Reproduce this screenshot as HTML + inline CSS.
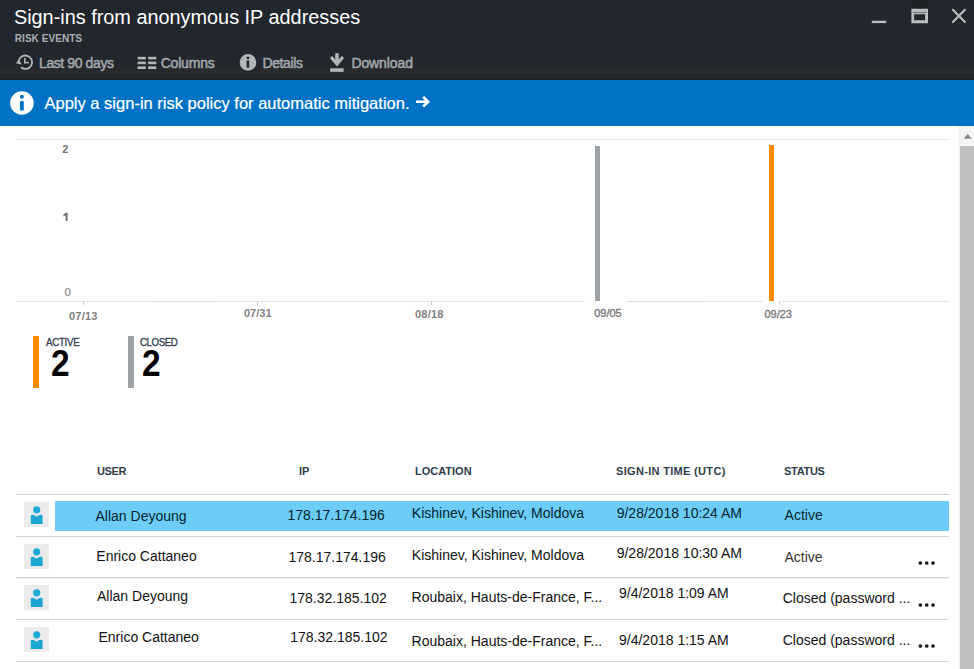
<!DOCTYPE html>
<html><head><meta charset="utf-8">
<style>
html,body{margin:0;padding:0;}
body{width:974px;height:669px;position:relative;overflow:hidden;background:#fff;font-family:"Liberation Sans",sans-serif;}
.t{position:absolute;white-space:nowrap;}
.r{position:absolute;}
.ic{position:absolute;overflow:visible;}
</style></head><body>
<div class="r" style="left:0px;top:0px;width:974px;height:80px;background:#22272e;"></div>
<div class="r" style="left:0px;top:67px;width:974px;height:6.5px;background:#27292d;"></div>
<div class="r" style="left:0px;top:77.5px;width:974px;height:2.5px;background:#1c2128;"></div>
<div class="t" style="left:13.90px;top:8.27px;font-size:19.88px;line-height:19.88px;color:#ffffff;">Sign-ins from anonymous IP addresses</div>
<div class="t" style="left:14.80px;top:34.03px;font-size:10px;line-height:10px;color:#a9aeb4;font-weight:bold;letter-spacing:0.05px;">RISK EVENTS</div>
<div class="t" style="left:39.00px;top:55.95px;font-size:14px;line-height:14px;color:#a3a8ad;letter-spacing:-0.4px;-webkit-text-stroke:0.5px #a3a8ad;">Last 90 days</div>
<div class="t" style="left:160.70px;top:55.95px;font-size:14px;line-height:14px;color:#a3a8ad;letter-spacing:-0.2px;-webkit-text-stroke:0.5px #a3a8ad;">Columns</div>
<div class="t" style="left:262.50px;top:55.95px;font-size:14px;line-height:14px;color:#a3a8ad;letter-spacing:-0.4px;-webkit-text-stroke:0.5px #a3a8ad;">Details</div>
<div class="t" style="left:351.40px;top:55.95px;font-size:14px;line-height:14px;color:#a3a8ad;letter-spacing:-0.1px;-webkit-text-stroke:0.5px #a3a8ad;">Download</div>
<svg class="ic" style="left:0;top:0" width="974" height="80" viewBox="0 0 974 80">
 <g fill="none" stroke="#b3b7bb" stroke-width="2">
  <path d="M21.0 67.3 A6.7 6.7 0 1 0 18.7 61.4" stroke-width="1.8"/>
 </g>
 <path d="M15.9 63.3 L19.0 59.6 L21.6 64.6 Z" fill="#b3b7bb"/>
 <rect x="24.1" y="58.1" width="1.6" height="5.3" fill="#b3b7bb"/>
 <rect x="24.1" y="61.9" width="4.8" height="1.5" fill="#b3b7bb"/>
 <g fill="#b3b7bb">
  <rect x="137.6" y="56.8" width="8.2" height="2.6"/><rect x="148.1" y="56.8" width="8.2" height="2.6"/>
  <rect x="137.6" y="61.6" width="8.2" height="2.6"/><rect x="148.1" y="61.6" width="8.2" height="2.6"/>
  <rect x="137.6" y="66.4" width="8.2" height="2.6"/><rect x="148.1" y="66.4" width="8.2" height="2.6"/>
  <circle cx="248" cy="62.4" r="8.3"/>
  <rect x="330.2" y="68.3" width="13.4" height="3.5"/>
 </g>
 <g fill="#22272e">
  <rect x="246.6" y="56.8" width="2.6" height="2.2"/>
  <rect x="246.6" y="60.4" width="2.6" height="7.3"/>
 </g>
 <g fill="#b3b7bb">
  <path d="M335.2 53.6 Q337 52.6 338.8 53.6 V63 H335.2 Z"/>
  <path d="M329.9 58.1 L332.3 55.9 L337 61.4 L341.7 55.9 L344.1 58.1 L337 66.4 Z"/>
 </g>
 <rect x="911.5" y="0" width="16.5" height="8.5" fill="#1f2328"/>
 <rect x="871.8" y="20.7" width="14.4" height="2.4" fill="#b9bcc0"/>
 <path fill="#b9bcc0" fill-rule="evenodd" d="M911.4 8.7 H928 V23.3 H911.4 Z M914.1 14.3 V20.3 H925.1 V14.3 Z"/>
 <rect x="913" y="12" width="13.5" height="0.9" fill="#6c7075"/>
 <path d="M952.9 9.8 L964.9 22 M964.9 9.8 L952.9 22" stroke="#b9bcc0" stroke-width="2.1" stroke-linecap="round" fill="none"/>
</svg>
<div class="r" style="left:0px;top:80px;width:974px;height:46px;background:#0072c6;"></div>
<svg class="ic" style="left:0;top:80px" width="60" height="46" viewBox="0 80 60 46">
 <circle cx="21.9" cy="103" r="11.8" fill="#ffffff"/>
 <circle cx="21.9" cy="96.8" r="1.95" fill="#0072c6"/>
 <rect x="20.0" y="100.9" width="3.8" height="9.7" rx="0.9" fill="#0072c6"/>
</svg>
<div class="t" style="left:44.50px;top:94.83px;font-size:16.5px;line-height:16.5px;color:#ffffff;-webkit-text-stroke:0.2px #fff;">Apply a sign-in risk policy for automatic mitigation.</div>
<svg class="ic" style="left:410px;top:90px" width="24" height="24" viewBox="410 90 24 24">
 <path d="M416 101.7 H427.5 M423.2 96.9 L428.2 101.7 L423.2 106.5" fill="none" stroke="#fff" stroke-width="2.6" stroke-linejoin="miter"/>
</svg>
<div class="r" style="left:958px;top:126px;width:16px;height:543px;background:#f3f3f3;"></div>
<div class="r" style="left:960px;top:144px;width:14px;height:1.5px;background:#fafafa;"></div>
<div class="r" style="left:960px;top:145.5px;width:14px;height:524px;background:#c1c1c1;"></div>
<svg class="ic" style="left:959px;top:126px" width="15" height="20" viewBox="959 126 15 20">
 <path d="M963.6 138.8 L967.7 134 L971.8 138.8 Z" fill="#8a8a8a"/>
</svg>
<div class="r" style="left:16px;top:139px;width:933px;height:1px;background:#e4e4e4;"></div>
<div class="r" style="left:16px;top:301px;width:569px;height:1px;background:#e2e2e2;"></div>
<div class="r" style="left:627px;top:301px;width:135px;height:1px;background:#e2e2e2;"></div>
<div class="r" style="left:781px;top:301px;width:168px;height:1px;background:#e2e2e2;"></div>
<div class="r" style="left:153px;top:300.5px;width:59px;height:1.5px;background:#dcdcdc;"></div>
<div class="r" style="left:627px;top:300.5px;width:75px;height:1.5px;background:#dcdcdc;"></div>
<div class="r" style="left:83.4px;top:301px;width:1px;height:4px;background:#cfcfcf;"></div>
<div class="r" style="left:257.2px;top:301px;width:1px;height:4px;background:#cfcfcf;"></div>
<div class="r" style="left:430.8px;top:301px;width:1px;height:4px;background:#cfcfcf;"></div>
<div class="r" style="left:778.5px;top:301px;width:1px;height:4px;background:#cfcfcf;"></div>
<div class="t" style="left:62.30px;top:143.69px;font-size:11px;line-height:11px;color:#707070;font-weight:bold;">2</div>
<svg class="ic" style="left:60px;top:210px" width="12" height="14" viewBox="60 210 12 14"><path d="M65.6 212.8 H67.6 V221.1 H65.6 V215.2 Q64.6 216.0 63.3 216.4 V214.7 Q64.9 214.0 65.6 212.8 Z" fill="#6e6e6e"/></svg>
<div class="t" style="left:64.60px;top:287.43px;font-size:11.3px;line-height:11.3px;color:#8c8c8c;-webkit-text-stroke:0.25px #8c8c8c;">0</div>
<div class="t" style="left:69.00px;top:311.09px;font-size:11px;line-height:11px;color:#7f7f7f;font-weight:bold;letter-spacing:0.2px;">07/13</div>
<div class="t" style="left:244.00px;top:307.69px;font-size:11px;line-height:11px;color:#7f7f7f;font-weight:bold;">07/31</div>
<div class="t" style="left:415.00px;top:309.39px;font-size:11px;line-height:11px;color:#7f7f7f;font-weight:bold;letter-spacing:0.2px;">08/18</div>
<div class="t" style="left:594.20px;top:307.79px;font-size:11px;line-height:11px;color:#777;-webkit-text-stroke:0.35px #777;">09/05</div>
<div class="t" style="left:764.40px;top:308.89px;font-size:11px;line-height:11px;color:#777;-webkit-text-stroke:0.35px #777;">09/23</div>
<div class="r" style="left:595px;top:146px;width:5px;height:154.5px;background:#9ca1a6;"></div>
<div class="r" style="left:769px;top:144.5px;width:5px;height:156px;background:#ff8c00;"></div>
<div class="r" style="left:33px;top:336px;width:6px;height:52px;background:#ff8c00;"></div>
<div class="r" style="left:128px;top:336px;width:5.5px;height:52px;background:#9ca1a6;"></div>
<div class="t" style="left:46.00px;top:337.16px;font-size:10.8px;line-height:10.8px;color:#32404e;letter-spacing:-0.3px;-webkit-text-stroke:0.3px #32404e;transform:scaleX(0.9);transform-origin:0 0;">ACTIVE</div>
<div class="t" style="left:139.80px;top:337.16px;font-size:10.8px;line-height:10.8px;color:#32404e;letter-spacing:-0.5px;-webkit-text-stroke:0.3px #32404e;transform:scaleX(0.9);transform-origin:0 0;">CLOSED</div>
<div class="t" style="left:50.60px;top:346.03px;font-size:36px;line-height:36px;color:#000;font-weight:bold;transform:scaleX(0.93);transform-origin:0 0;">2</div>
<div class="t" style="left:141.50px;top:346.03px;font-size:36px;line-height:36px;color:#000;font-weight:bold;transform:scaleX(0.93);transform-origin:0 0;">2</div>
<div class="t" style="left:97.00px;top:465.99px;font-size:11px;line-height:11px;color:#2f3d4b;font-weight:bold;letter-spacing:-0.4px;">USER</div>
<div class="t" style="left:299.00px;top:465.99px;font-size:11px;line-height:11px;color:#2f3d4b;font-weight:bold;">IP</div>
<div class="t" style="left:415.00px;top:465.99px;font-size:11px;line-height:11px;color:#2f3d4b;font-weight:bold;">LOCATION</div>
<div class="t" style="left:616.00px;top:465.99px;font-size:11px;line-height:11px;color:#2f3d4b;font-weight:bold;letter-spacing:0.32px;">SIGN-IN TIME (UTC)</div>
<div class="t" style="left:784.00px;top:465.99px;font-size:11px;line-height:11px;color:#2f3d4b;font-weight:bold;letter-spacing:-0.3px;">STATUS</div>
<div class="r" style="left:16px;top:494px;width:933px;height:1px;background:#cccccc;"></div>
<div class="r" style="left:16px;top:536px;width:933px;height:1px;background:#d4d4d4;"></div>
<div class="r" style="left:16px;top:577px;width:933px;height:1px;background:#d4d4d4;"></div>
<div class="r" style="left:16px;top:619px;width:933px;height:1px;background:#d4d4d4;"></div>
<div class="r" style="left:16px;top:661px;width:933px;height:1px;background:#d4d4d4;"></div>
<div class="r" style="left:16px;top:578px;width:933px;height:1px;background:#ececec;"></div>
<div class="r" style="left:55px;top:500.5px;width:894px;height:30.5px;background:#6bcdf8;"></div>
<svg class="ic" style="left:24px;top:502px" width="25" height="25" viewBox="0 0 25 25">
 <rect x="0" y="0" width="25" height="25" fill="#ebebeb"/>
 <circle cx="12.7" cy="7.8" r="3.6" fill="#1eaad6"/>
 <path d="M6.8 14.1 Q6.8 12.8 8.3 12.8 Q10.6 12.9 12.6 14.8 Q14.6 12.9 17.0 12.8 Q18.6 12.8 18.6 14.1 V22.0 H6.8 Z" fill="#1aa6d0"/>
</svg>
<svg class="ic" style="left:24px;top:543.6px" width="25" height="25" viewBox="0 0 25 25">
 <rect x="0" y="0" width="25" height="25" fill="#ebebeb"/>
 <circle cx="12.7" cy="7.8" r="3.6" fill="#1eaad6"/>
 <path d="M6.8 14.1 Q6.8 12.8 8.3 12.8 Q10.6 12.9 12.6 14.8 Q14.6 12.9 17.0 12.8 Q18.6 12.8 18.6 14.1 V22.0 H6.8 Z" fill="#1aa6d0"/>
</svg>
<svg class="ic" style="left:24px;top:585.3px" width="25" height="25" viewBox="0 0 25 25">
 <rect x="0" y="0" width="25" height="25" fill="#ebebeb"/>
 <circle cx="12.7" cy="7.8" r="3.6" fill="#1eaad6"/>
 <path d="M6.8 14.1 Q6.8 12.8 8.3 12.8 Q10.6 12.9 12.6 14.8 Q14.6 12.9 17.0 12.8 Q18.6 12.8 18.6 14.1 V22.0 H6.8 Z" fill="#1aa6d0"/>
</svg>
<svg class="ic" style="left:24px;top:626.8px" width="25" height="25" viewBox="0 0 25 25">
 <rect x="0" y="0" width="25" height="25" fill="#ebebeb"/>
 <circle cx="12.7" cy="7.8" r="3.6" fill="#1eaad6"/>
 <path d="M6.8 14.1 Q6.8 12.8 8.3 12.8 Q10.6 12.9 12.6 14.8 Q14.6 12.9 17.0 12.8 Q18.6 12.8 18.6 14.1 V22.0 H6.8 Z" fill="#1aa6d0"/>
</svg>
<div class="t" style="left:95.50px;top:508.95px;font-size:14px;line-height:14px;color:#071f2e;">Allan Deyoung</div>
<div class="t" style="left:287.50px;top:507.85px;font-size:14px;line-height:14px;color:#071f2e;">178.17.174.196</div>
<div class="t" style="left:411.80px;top:506.15px;font-size:14px;line-height:14px;color:#071f2e;">Kishinev, Kishinev, Moldova</div>
<div class="t" style="left:616.70px;top:506.05px;font-size:14px;line-height:14px;color:#071f2e;">9/28/2018 10:24 AM</div>
<div class="t" style="left:784.60px;top:507.55px;font-size:14px;line-height:14px;color:#071f2e;">Active</div>
<div class="t" style="left:96.30px;top:549.05px;font-size:14px;line-height:14px;color:#111;">Enrico Cattaneo</div>
<div class="t" style="left:288.50px;top:550.15px;font-size:14px;line-height:14px;color:#111;">178.17.174.196</div>
<div class="t" style="left:411.80px;top:548.05px;font-size:14px;line-height:14px;color:#111;">Kishinev, Kishinev, Moldova</div>
<div class="t" style="left:616.70px;top:545.95px;font-size:14px;line-height:14px;color:#111;">9/28/2018 10:30 AM</div>
<div class="t" style="left:784.50px;top:550.15px;font-size:14px;line-height:14px;color:#333;">Active</div>
<div class="t" style="left:97.00px;top:588.85px;font-size:14px;line-height:14px;color:#111;">Allan Deyoung</div>
<div class="t" style="left:289.50px;top:590.55px;font-size:14px;line-height:14px;color:#111;">178.32.185.102</div>
<div class="t" style="left:411.60px;top:589.65px;font-size:14px;line-height:14px;color:#111;">Roubaix, Hauts-de-France, F...</div>
<div class="t" style="left:619.00px;top:586.15px;font-size:14px;line-height:14px;color:#111;">9/4/2018 1:09 AM</div>
<div class="t" style="left:782.70px;top:591.05px;font-size:14px;line-height:14px;color:#111;">Closed (password ...</div>
<div class="t" style="left:98.50px;top:630.45px;font-size:14px;line-height:14px;color:#111;">Enrico Cattaneo</div>
<div class="t" style="left:290.20px;top:630.25px;font-size:14px;line-height:14px;color:#111;">178.32.185.102</div>
<div class="t" style="left:411.60px;top:634.15px;font-size:14px;line-height:14px;color:#111;">Roubaix, Hauts-de-France, F...</div>
<div class="t" style="left:619.00px;top:632.55px;font-size:14px;line-height:14px;color:#111;">9/4/2018 1:15 AM</div>
<div class="t" style="left:782.70px;top:632.85px;font-size:14px;line-height:14px;color:#111;">Closed (password ...</div>
<svg class="ic" style="left:916px;top:560.3px" width="22" height="6" viewBox="916 560.3 22 6">
 <circle cx="920.4" cy="563.3" r="1.85" fill="#1a1a1a"/><circle cx="926.7" cy="563.3" r="1.85" fill="#1a1a1a"/><circle cx="933.0" cy="563.3" r="1.85" fill="#1a1a1a"/>
</svg>
<svg class="ic" style="left:916px;top:601.8px" width="22" height="6" viewBox="916 601.8 22 6">
 <circle cx="920.4" cy="604.8" r="1.85" fill="#1a1a1a"/><circle cx="926.7" cy="604.8" r="1.85" fill="#1a1a1a"/><circle cx="933.0" cy="604.8" r="1.85" fill="#1a1a1a"/>
</svg>
<svg class="ic" style="left:916px;top:643.3px" width="22" height="6" viewBox="916 643.3 22 6">
 <circle cx="920.4" cy="646.3" r="1.85" fill="#1a1a1a"/><circle cx="926.7" cy="646.3" r="1.85" fill="#1a1a1a"/><circle cx="933.0" cy="646.3" r="1.85" fill="#1a1a1a"/>
</svg>

</body></html>
